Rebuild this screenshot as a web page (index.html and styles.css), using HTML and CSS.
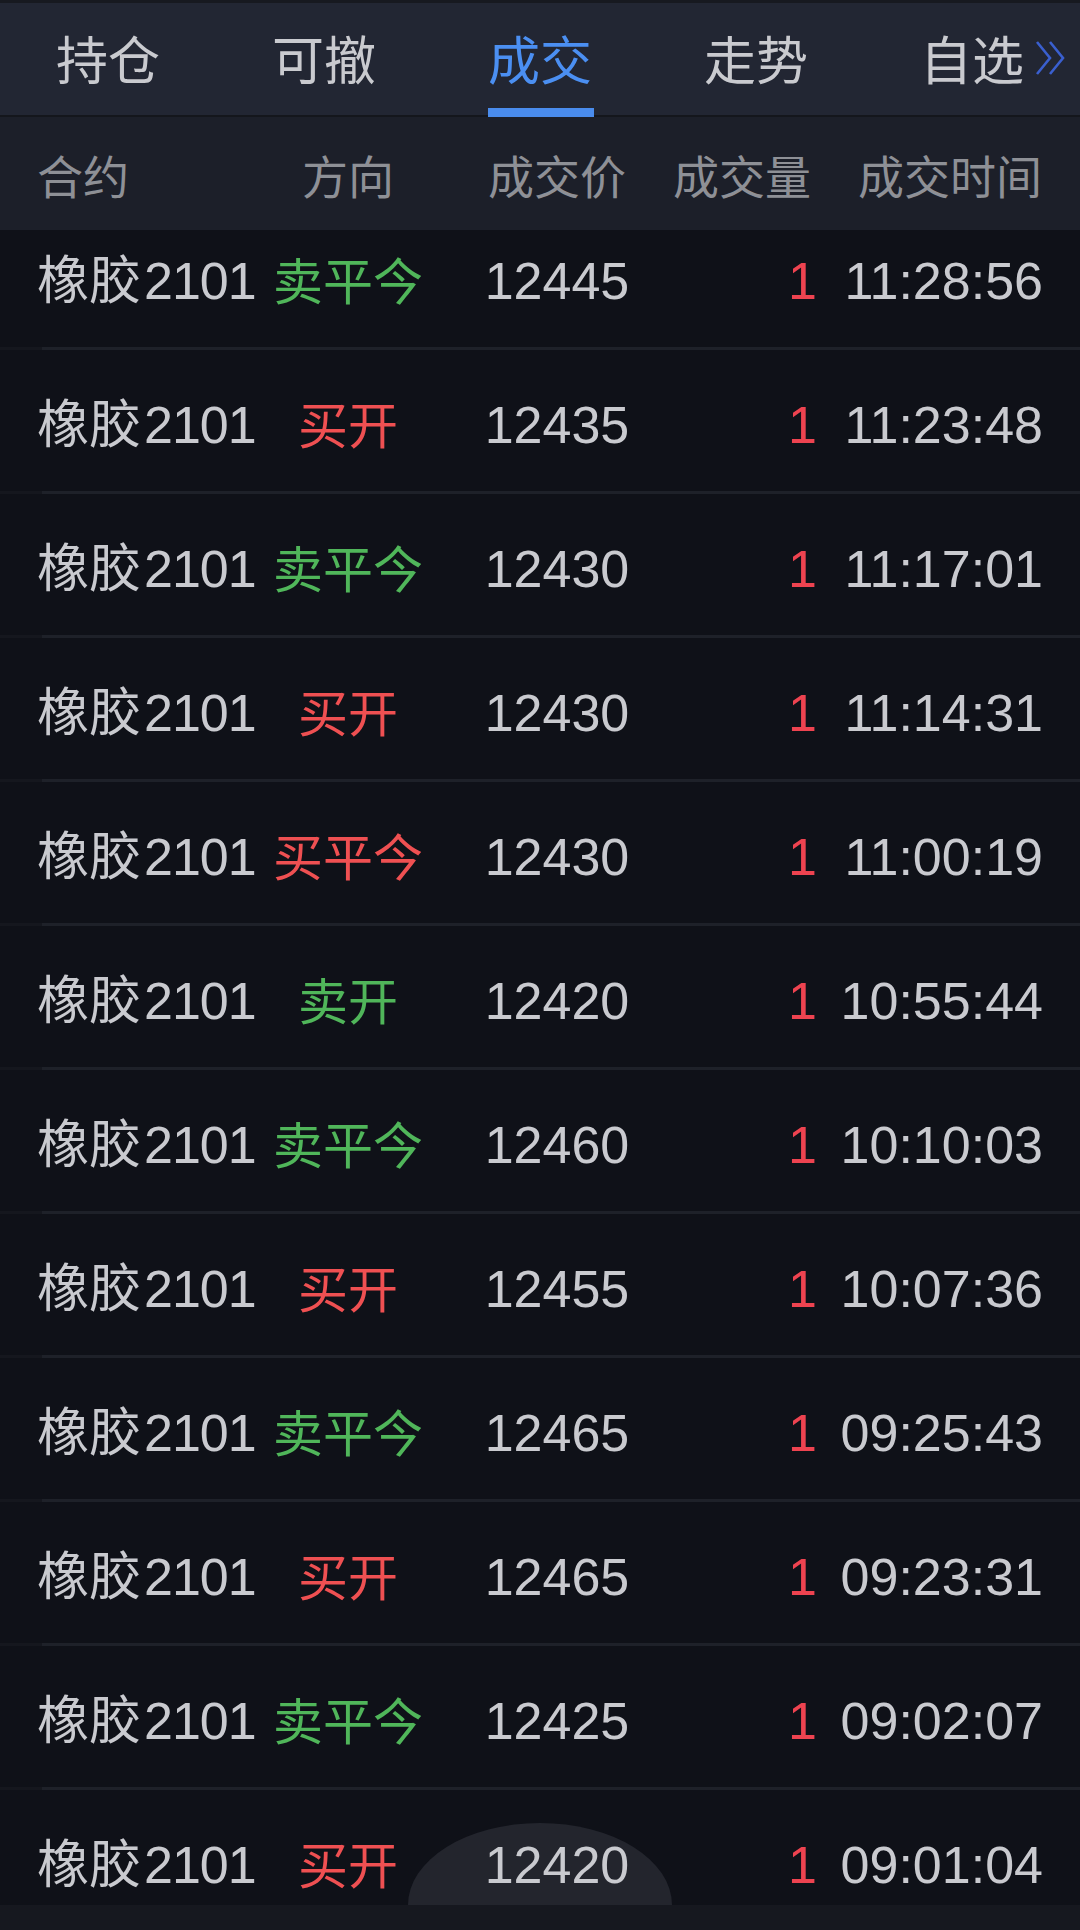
FILE: index.html
```html
<!DOCTYPE html>
<html lang="zh-CN">
<head>
<meta charset="utf-8">
<title>成交</title>
<link rel="stylesheet" href="styles.css">
</head>
<body>
<div class="app">
  <nav class="tabs">
    <div class="tab">持仓</div>
    <div class="tab">可撤</div>
    <div class="tab active">成交</div>
    <div class="tab">走势</div>
    <div class="tab"><span class="more">自选<svg class="chev" viewBox="0 0 32 38" width="32" height="38"><polyline points="3,3 16,19 3,35" /><polyline points="16,3 29,19 16,35" /></svg></span></div>
  </nav>
  <div class="thead grid">
    <span class="c-name">合约</span>
    <span class="c-dir">方向</span>
    <span class="c-price">成交价</span>
    <span class="c-qty">成交量</span>
    <span class="c-time">成交时间</span>
  </div>
  <div class="list">
    <div class="rows">
      <div class="row grid"><span class="c-name">橡胶<i class="num">2101</i></span><span class="c-dir sell">卖平今</span><span class="c-price">12445</span><span class="c-qty">1</span><span class="c-time">11:28:56</span></div>
      <div class="row grid"><span class="c-name">橡胶<i class="num">2101</i></span><span class="c-dir buy">买开</span><span class="c-price">12435</span><span class="c-qty">1</span><span class="c-time">11:23:48</span></div>
      <div class="row grid"><span class="c-name">橡胶<i class="num">2101</i></span><span class="c-dir sell">卖平今</span><span class="c-price">12430</span><span class="c-qty">1</span><span class="c-time">11:17:01</span></div>
      <div class="row grid"><span class="c-name">橡胶<i class="num">2101</i></span><span class="c-dir buy">买开</span><span class="c-price">12430</span><span class="c-qty">1</span><span class="c-time">11:14:31</span></div>
      <div class="row grid"><span class="c-name">橡胶<i class="num">2101</i></span><span class="c-dir buy">买平今</span><span class="c-price">12430</span><span class="c-qty">1</span><span class="c-time">11:00:19</span></div>
      <div class="row grid"><span class="c-name">橡胶<i class="num">2101</i></span><span class="c-dir sell">卖开</span><span class="c-price">12420</span><span class="c-qty">1</span><span class="c-time">10:55:44</span></div>
      <div class="row grid"><span class="c-name">橡胶<i class="num">2101</i></span><span class="c-dir sell">卖平今</span><span class="c-price">12460</span><span class="c-qty">1</span><span class="c-time">10:10:03</span></div>
      <div class="row grid"><span class="c-name">橡胶<i class="num">2101</i></span><span class="c-dir buy">买开</span><span class="c-price">12455</span><span class="c-qty">1</span><span class="c-time">10:07:36</span></div>
      <div class="row grid"><span class="c-name">橡胶<i class="num">2101</i></span><span class="c-dir sell">卖平今</span><span class="c-price">12465</span><span class="c-qty">1</span><span class="c-time">09:25:43</span></div>
      <div class="row grid"><span class="c-name">橡胶<i class="num">2101</i></span><span class="c-dir buy">买开</span><span class="c-price">12465</span><span class="c-qty">1</span><span class="c-time">09:23:31</span></div>
      <div class="row grid"><span class="c-name">橡胶<i class="num">2101</i></span><span class="c-dir sell">卖平今</span><span class="c-price">12425</span><span class="c-qty">1</span><span class="c-time">09:02:07</span></div>
      <div class="row grid"><span class="c-name">橡胶<i class="num">2101</i></span><span class="c-dir buy">买开</span><span class="c-price">12420</span><span class="c-qty">1</span><span class="c-time">09:01:04</span></div>
    </div>
    <div class="dome"></div>
  </div>
  <div class="bottombar"></div>
</div>
</body>
</html>
```
FILE: styles.css
```css
* { box-sizing: border-box; }
html, body {
  margin: 0;
  padding: 0;
  background: #0f1118;
}
body {
  font-family: "Liberation Sans", "Noto Sans CJK SC", sans-serif;
  color: #c9cacf;
}
.app {
  width: 1080px;
  height: 1930px;
  display: flex;
  flex-direction: column;
  overflow: hidden;
}

/* tabs */
.tabs {
  flex: 0 0 117px;
  display: flex;
  background: #222633;
  border-top: 3px solid #171920;
  border-bottom: 2px solid #14161c;
}
.tab {
  flex: 1;
  position: relative;
  display: flex;
  align-items: center;
  justify-content: center;
  font-family: "Noto Sans CJK SC", sans-serif;
  font-size: 52px;
  line-height: 62px;
  color: #c9cacf;
  padding-bottom: 2px;
}
.tab.active { color: #4b8ff2; }
.tab.active::after {
  content: "";
  position: absolute;
  left: 50%;
  bottom: -2px;
  width: 106px;
  height: 9px;
  margin-left: -52px;
  background: #4a8ced;
}
.more { position: relative; }
.chev {
  position: absolute;
  left: calc(100% + 10px);
  top: 12px;
  fill: none;
  stroke: #3a5fcf;
  stroke-width: 2.6;
}

/* grid columns */
.grid {
  display: grid;
  grid-template-columns: 222px 178px 240px 140px 226px;
  padding: 0 37px;
  align-items: center;
}
.grid > span { white-space: nowrap; display: flex; }
.c-name { justify-content: flex-start; }
.c-dir { justify-content: center; }
.c-price { justify-content: center; }
.c-qty { justify-content: flex-end; }
.c-time { justify-content: flex-end; }

/* header */
.thead {
  flex: 0 0 113px;
  background: #1c1f29;
  font-family: "Noto Sans CJK SC", sans-serif;
  font-size: 46px;
  line-height: 56px;
  color: #8e9096;
}
.thead .c-qty { padding-right: 6px; }
.thead .c-time { padding-right: 1px; }

/* list */
.list {
  flex: 1;
  position: relative;
  overflow: hidden;
}
.rows {
  position: relative;
  z-index: 1;
  margin-top: -24px;
}
.row {
  height: 144px;
  padding-top: 9px;
  font-size: 52px;
  line-height: 60px;
  border-bottom: 3px solid transparent;
  background-image: linear-gradient(to right, #15171e 42px, #1e2129 42px);
  background-size: 100% 3px;
  background-position: 0 100%;
  background-repeat: no-repeat;
  background-origin: border-box;
  background-clip: border-box;
}
.num {
  font-style: normal;
  margin-left: 3px;
  letter-spacing: -1px;
}
.row .c-name { color: #c9cacf; }
.row .c-dir {
  font-family: "Noto Sans CJK SC", sans-serif;
  font-size: 50px;
  padding-bottom: 7px;
}
.row .sell { color: #50b65a; }
.row .buy { color: #ef5052; }
.row .c-price { color: #c9cacf; }
.row .c-qty { color: #ee4350; }
.row .c-time { color: #c9cacf; }

.dome {
  position: absolute;
  left: 408px;
  bottom: 0;
  width: 264px;
  height: 82px;
  background: #23252d;
  border-radius: 132px 132px 0 0 / 82px 82px 0 0;
  z-index: 0;
}

.bottombar {
  flex: 0 0 25px;
  background: #16181f;
}
```
